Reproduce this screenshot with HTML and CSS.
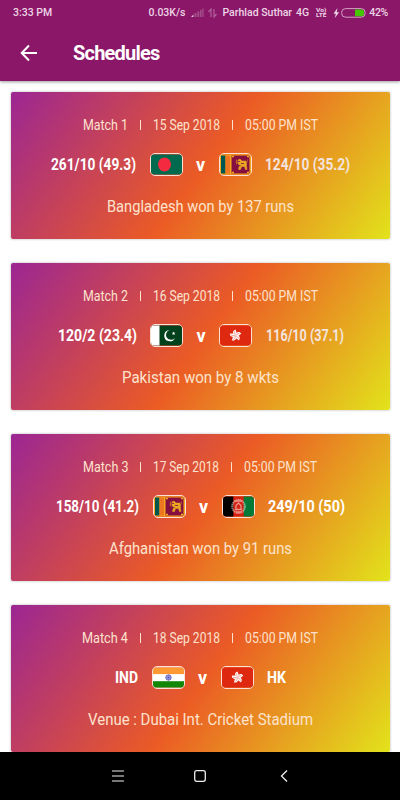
FILE: index.html
```
<!DOCTYPE html>
<html lang="en">
<head>
    <meta charset="UTF-8">
    <meta name="viewport" content="width=device-width, initial-scale=1.0">
    <title>Schedules</title>
    <link rel="stylesheet" href="styles.css">
</head>
<body>

    <!-- Flags, shared by the match cards -->
    <svg class="sprite" width="0" height="0">
        <symbol id="bd" viewBox="0 0 31 20">
            <rect width="31" height="20" fill="#006a4e"/>
            <ellipse cx="13.5" cy="10" rx="6.5" ry="7" fill="#f42a41"/>
        </symbol>
        <symbol id="lk" viewBox="0 0 31 20">
            <rect width="31" height="20" fill="#f5a91d"/>
            <rect x="1" y="1" width="4.5" height="18" fill="#00574f"/>
            <rect x="5.5" y="1" width="4.5" height="18" fill="#ec7720"/>
            <rect x="11.5" y="1" width="18" height="18" fill="#85103f"/>
            <path d="M12 2h2M12 18h2M27 2h2M27 18h2" stroke="#f5a91d" stroke-width="1.5"/>
            <path d="M16.500 5v5M15.500 7.500h2M18 5.500l2-1 2 2h4l.5 2v3l.5 3.500h-1.500l-1-3h-3l-1 3h-2l1-4-1.500-2zM27 8l.5-3" fill="#e9a724" stroke="#e9a724" stroke-width=".5"/>
            <path d="M18 7h2M21 9h3M18.500 11h2" stroke="#85103f" stroke-width=".8"/>
        </symbol>
        <symbol id="pk" viewBox="0 0 31 20">
            <rect width="31" height="20" fill="#01411c"/>
            <rect width="8.5" height="20" fill="#fff"/>
            <path d="M18.500 4.600a5.600 5.600 0 1 0 5.500 7.800a5 5 0 1 1-5.500-7.800z" fill="#fff"/>
            <path d="M22.600 6l.5 1.200 1.400.1-1.100.8.4 1.300-1.200-.7-1.200.7.4-1.300-1.100-.8 1.400-.1z" fill="#fff"/>
        </symbol>
        <symbol id="hk" viewBox="0 0 31 20">
            <rect width="31" height="20" fill="#de2910"/>
            <g fill="#fff">
                <path id="petal" d="M15.500 10c-3.200-1.300-3.300-5.300.3-6c-.6 1.700 2.400 2.700-.3 6z"/>
                <use href="#petal" transform="rotate(72 15.5 10)"/>
                <use href="#petal" transform="rotate(144 15.5 10)"/>
                <use href="#petal" transform="rotate(216 15.5 10)"/>
                <use href="#petal" transform="rotate(288 15.5 10)"/>
            </g>
            <g fill="none" stroke="#de2910" stroke-width=".4">
                <path id="stamen" d="M15.500 9.300c-1-1.300-1.200-2.500-.6-3.700"/>
                <use href="#stamen" transform="rotate(72 15.5 10)"/>
                <use href="#stamen" transform="rotate(144 15.5 10)"/>
                <use href="#stamen" transform="rotate(216 15.5 10)"/>
                <use href="#stamen" transform="rotate(288 15.5 10)"/>
            </g>
        </symbol>
        <symbol id="af" viewBox="0 0 31 20">
            <rect width="31" height="20" fill="#d32011"/>
            <rect width="10.3" height="20" fill="#000"/>
            <rect x="20.7" width="10.3" height="20" fill="#007a36"/>
            <g fill="none" stroke="#fff" opacity=".5">
                <ellipse cx="15.5" cy="10" rx="6.3" ry="6.5" stroke-width="2" stroke-dasharray="1.4 .5"/>
                <path d="M12 13h7M13 13V9l2.500-2.500L18 9v4M12 4.500h7M13 15.500h5" stroke-width="1.3"/>
            </g>
        </symbol>
        <symbol id="in" viewBox="0 0 31 20">
            <rect width="31" height="20" fill="#fff"/>
            <rect width="31" height="6.600" fill="#ff9933"/>
            <rect y="13.700" width="31" height="6.300" fill="#138808"/>
            <circle cx="15.500" cy="10" r="2.700" fill="#c8c8ee" stroke="#4b4bb5" stroke-width=".8"/>
            <path d="M12.800 10h5.400M15.500 7.300v5.400M13.600 8.100l3.800 3.800M17.400 8.100l-3.800 3.800" stroke="#4b4bb5" stroke-width=".5"/>
        </symbol>
    </svg>

    <header class="app-header">
        <div class="status-bar">
            <span class="clock">3:33 PM</span>
            <span class="speed">0.03K/s</span>
            <svg class="signal" width="13" height="10" viewBox="0 0 13 10">
                <path d="M0 9h2.500V6.500z" fill="#e5c0da"/>
                <path d="M3.500 9h2V5h-2zM6.300 9h2V3.500h-2zM9 9h1.600V2H9zM11.300 9h1.400V.5h-1.400z" fill="#a34d8a"/>
            </svg>
            <svg class="data" width="9" height="10" viewBox="0 0 9 10">
                <path d="M3 9V1L.5 4M6 1v8l2.500-3" fill="none" stroke="#b0629b" stroke-width="1.200"/>
            </svg>
            <span class="carrier">Parhlad Suthar</span>
            <span class="network">4G</span>
            <svg class="volte" width="11" height="11" viewBox="0 0 11 11">
                <text x="0" y="4.800" textLength="10.500" lengthAdjust="spacingAndGlyphs">Vo)</text>
                <text x="0" y="10.300" textLength="10.500" lengthAdjust="spacingAndGlyphs">LTE</text>
            </svg>
            <svg class="bolt" width="7" height="10" viewBox="0 0 7 10">
                <path d="M4.500 0L.5 5.800h2.300L1.800 10l4.300-5.800H3.700z" fill="#edd5e6"/>
            </svg>
            <svg class="battery" width="25" height="10" viewBox="0 0 25 10">
                <rect x=".6" y=".6" width="23.600" height="8.600" rx="4" fill="none" stroke="#d2a0c3"/>
                <path d="M14 1.500h6.500a2.500 2.500 0 0 1 2.500 2.500v1.800a2.500 2.500 0 0 1-2.500 2.500H14z" fill="#43c800"/>
            </svg>
            <span class="percent">42%</span>
        </div>
        <div class="title-bar">
            <svg class="back" width="18" height="18" viewBox="0 0 18 18">
                <path d="M17 9H2M9 1.500L1.700 9L9 16.500" fill="none" stroke="#fff" stroke-width="2"/>
            </svg>
            <h1>Schedules</h1>
        </div>
    </header>

    <main class="match-list">
        <section class="match-card">
            <div class="meta">
                <svg width="46" height="20"><text y="15" textLength="45" lengthAdjust="spacingAndGlyphs">Match 1</text></svg>
                <i></i>
                <svg width="68" height="20"><text y="15" textLength="67" lengthAdjust="spacingAndGlyphs">15 Sep 2018</text></svg>
                <i></i>
                <svg width="74" height="20"><text y="15" textLength="73" lengthAdjust="spacingAndGlyphs">05:00 PM IST</text></svg>
            </div>
            <div class="teams">
                <svg width="85" height="24"><text y="18" textLength="85" lengthAdjust="spacingAndGlyphs">261/10 (49.3)</text></svg>
                <svg class="flag"><use href="#bd"/></svg>
                <span class="versus">v</span>
                <svg class="flag"><use href="#lk"/></svg>
                <svg class="lost" width="85" height="24"><text y="18" textLength="85" lengthAdjust="spacingAndGlyphs">124/10 (35.2)</text></svg>
            </div>
            <div class="result">
                <svg width="188" height="24"><text y="18" textLength="187" lengthAdjust="spacingAndGlyphs">Bangladesh won by 137 runs</text></svg>
            </div>
        </section>

        <section class="match-card">
            <div class="meta">
                <svg width="46" height="20"><text y="15" textLength="45" lengthAdjust="spacingAndGlyphs">Match 2</text></svg>
                <i></i>
                <svg width="68" height="20"><text y="15" textLength="67" lengthAdjust="spacingAndGlyphs">16 Sep 2018</text></svg>
                <i></i>
                <svg width="74" height="20"><text y="15" textLength="73" lengthAdjust="spacingAndGlyphs">05:00 PM IST</text></svg>
            </div>
            <div class="teams">
                <svg width="79" height="24"><text y="18" textLength="79" lengthAdjust="spacingAndGlyphs">120/2 (23.4)</text></svg>
                <svg class="flag"><use href="#pk"/></svg>
                <span class="versus">v</span>
                <svg class="flag"><use href="#hk"/></svg>
                <svg class="lost" width="78" height="24"><text y="18" textLength="78" lengthAdjust="spacingAndGlyphs">116/10 (37.1)</text></svg>
            </div>
            <div class="result">
                <svg width="158" height="24"><text y="18" textLength="157" lengthAdjust="spacingAndGlyphs">Pakistan won by 8 wkts</text></svg>
            </div>
        </section>

        <section class="match-card">
            <div class="meta">
                <svg width="46" height="20"><text y="15" textLength="45.5" lengthAdjust="spacingAndGlyphs">Match 3</text></svg>
                <i></i>
                <svg width="67" height="20"><text y="15" textLength="66" lengthAdjust="spacingAndGlyphs">17 Sep 2018</text></svg>
                <i></i>
                <svg width="74" height="20"><text y="15" textLength="73" lengthAdjust="spacingAndGlyphs">05:00 PM IST</text></svg>
            </div>
            <div class="teams">
                <svg width="83" height="24"><text y="18" textLength="83" lengthAdjust="spacingAndGlyphs">158/10 (41.2)</text></svg>
                <svg class="flag"><use href="#lk"/></svg>
                <span class="versus">v</span>
                <svg class="flag"><use href="#af"/></svg>
                <svg width="77" height="24"><text y="18" textLength="77" lengthAdjust="spacingAndGlyphs">249/10 (50)</text></svg>
            </div>
            <div class="result">
                <svg width="184" height="24"><text y="18" textLength="183" lengthAdjust="spacingAndGlyphs">Afghanistan won by 91 runs</text></svg>
            </div>
        </section>

        <section class="match-card">
            <div class="meta">
                <svg width="47" height="20"><text y="15" textLength="46" lengthAdjust="spacingAndGlyphs">Match 4</text></svg>
                <i></i>
                <svg width="68" height="20"><text y="15" textLength="67" lengthAdjust="spacingAndGlyphs">18 Sep 2018</text></svg>
                <i></i>
                <svg width="74" height="20"><text y="15" textLength="73" lengthAdjust="spacingAndGlyphs">05:00 PM IST</text></svg>
            </div>
            <div class="teams">
                <svg width="23" height="24"><text y="18" textLength="23" lengthAdjust="spacingAndGlyphs">IND</text></svg>
                <svg class="flag"><use href="#in"/></svg>
                <span class="versus">v</span>
                <svg class="flag"><use href="#hk"/></svg>
                <svg width="19" height="24"><text y="18" textLength="19" lengthAdjust="spacingAndGlyphs">HK</text></svg>
            </div>
            <div class="result">
                <svg width="226" height="24"><text y="18" textLength="225" lengthAdjust="spacingAndGlyphs">Venue : Dubai Int. Cricket Stadium</text></svg>
            </div>
        </section>
    </main>

    <nav class="nav-bar">
        <svg width="12" height="12" viewBox="0 0 12 12"><path d="M0 1h12M0 6h12M0 11h12" stroke="#eee" stroke-width="1.200"/></svg>
        <svg width="12" height="12" viewBox="0 0 12 12"><rect x=".7" y=".7" width="10.600" height="10.600" rx="2" fill="none" stroke="#eee" stroke-width="1.300"/></svg>
        <svg width="12" height="12" viewBox="0 0 12 12"><path d="M11 .5L5.500 6L11 11.500" fill="none" stroke="#eee" stroke-width="1.300"/></svg>
    </nav>

</body>
</html>
```
FILE: styles.css
```
body {
    font-family: Roboto, "Liberation Sans", sans-serif;
    margin: 0;
    height: 800px;
    overflow: hidden;
    display: flex;
    flex-direction: column;
    background: #fff;
    color: #fff;
}

.sprite {
    position: absolute;
}

text {
    fill: currentColor;
}

.app-header {
    height: 81px;
    flex: none;
    background: #8b1768;
    box-shadow: 0 1px 3px rgba(0, 0, 0, 0.4);
}

/* --- Status bar --- */
.status-bar {
    display: flex;
    align-items: center;
    height: 25px;
    padding: 0 12px 0 13px;
    font-size: 10.5px;
    font-weight: 500;
    color: #edd5e6;
    white-space: nowrap;
}

.clock {
    margin-right: auto;
}

.signal {
    margin-left: 6px;
}

.data {
    margin: 0 5px 0 4px;
}

.network {
    margin-left: 4px;
}

.volte {
    margin-left: 7px;
    font-size: 5.5px;
    font-weight: 700;
    overflow: visible;
}

.bolt {
    margin: 0 1px 0 6px;
}

.percent {
    margin-left: 3px;
    letter-spacing: -0.3px;
}

/* --- Title --- */
.title-bar {
    display: flex;
    align-items: center;
    height: 56px;
    padding-left: 20px;
}

.title-bar h1 {
    margin: 0 0 0 35px;
    font-size: 20px;
    font-weight: 700;
    letter-spacing: -0.8px;
}

/* --- Match cards --- */
.match-list {
    flex: 1;
    min-height: 0;
    display: flex;
    flex-direction: column;
    gap: 24px;
    padding: 11px 10px 0 11px;
    overflow: hidden;
}

.match-card {
    flex: none;
    height: 147px;
    border-radius: 2px;
    background: linear-gradient(126.5deg, #9c2693, #eb5b25 51%, #e2e31b);
    box-shadow: 0 0 2px 1px rgba(0, 0, 0, 0.14);
}

.match-card svg:not(.flag) {
    overflow: visible;
}

.meta {
    display: flex;
    justify-content: center;
    align-items: center;
    height: 20px;
    padding-top: 23px;
    font-size: 14px;
    color: #fde3cd;
}

.meta i {
    width: 1px;
    height: 10px;
    margin: 0 12px 0 11px;
    background: #fde3cd;
}

.teams {
    display: flex;
    justify-content: center;
    align-items: center;
    height: 24px;
    margin-top: 17px;
    font-size: 16px;
    font-weight: 700;
}

.lost {
    color: #f3e4df;
}

.flag {
    box-sizing: border-box;
    width: 33px;
    height: 23px;
    margin: 0 13.5px;
    border: 1.5px solid #fbe0d8;
    border-radius: 5px;
}

.versus {
    font-size: 18px;
    width: 9px;
    text-align: center;
}

.result {
    display: flex;
    justify-content: center;
    margin-top: 18px;
    font-size: 16px;
    color: #fde3cd;
}

/* --- System navigation --- */
.nav-bar {
    display: flex;
    flex: none;
    justify-content: center;
    align-items: center;
    gap: 70px;
    height: 48px;
    background: #000;
}
```
